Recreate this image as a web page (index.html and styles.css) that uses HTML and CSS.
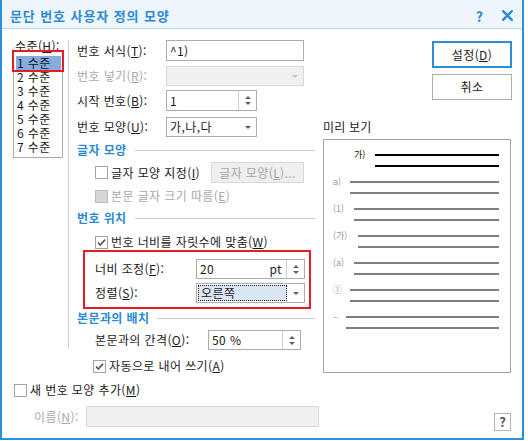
FILE: index.html
```html
<!DOCTYPE html>
<html lang="ko">
<head>
<meta charset="utf-8">
<title>문단 번호 사용자 정의 모양</title>
<link rel="stylesheet" href="styles.css">
</head>
<body>
<div class="window">
  <div class="titlebar">
    <span class="title">문단 번호 사용자 정의 모양</span>
    <span class="tb-help">?</span>
    <svg class="tb-close" width="11" height="11" viewBox="0 0 11 11"><path d="M1.2 1.2 L9.8 9.8 M9.8 1.2 L1.2 9.8" stroke="#2b8ad3" stroke-width="2.4" stroke-linecap="square"/></svg>
  </div>

  <div class="top">
    <div class="levels">
      <div class="lv-label">수준(<u>H</u>):</div>
      <div class="listbox">
        <div class="item sel">1 수준</div>
        <div class="item">2 수준</div>
        <div class="item">3 수준</div>
        <div class="item">4 수준</div>
        <div class="item">5 수준</div>
        <div class="item">6 수준</div>
        <div class="item">7 수준</div>
        <div class="mark"></div>
      </div>
    </div>

    <div class="form">
      <div class="row r1">
        <span class="lbl w89">번호 서식(<u>T</u>):</span>
        <div class="field w138"><span class="val">^1)</span></div>
      </div>
      <div class="row r2">
        <span class="lbl w89 dis">번호 넣기(<u>R</u>):</span>
        <div class="field w138 disabled"><span class="val"></span><span class="caret light"></span></div>
      </div>
      <div class="row r3">
        <span class="lbl w89">시작 번호(<u>B</u>):</span>
        <div class="field w91"><span class="val">1</span><span class="spin"><i class="up"></i><i class="dn"></i></span></div>
      </div>
      <div class="row r4">
        <span class="lbl w89">번호 모양(<u>U</u>):</span>
        <div class="field w91"><span class="val">가,나,다</span><span class="caret"></span></div>
      </div>

      <div class="sec s1">글자 모양</div>
      <div class="row r5 ind">
        <span class="cb"></span><span class="cb-text">글자 모양 지정(<u>I</u>)</span>
        <span class="pbtn">글자 모양(<u>L</u>)...</span>
      </div>
      <div class="row r6 ind">
        <span class="cb filled"></span><span class="cb-text dis">본문 글자 크기 따름(<u>E</u>)</span>
      </div>

      <div class="sec s2">번호 위치</div>
      <div class="row r7 ind">
        <span class="cb"><svg width="11" height="11" viewBox="0 0 11 11"><path d="M2 5.5 L4.3 8 L9 2.6" fill="none" stroke="#555" stroke-width="1.6"/></svg></span><span class="cb-text">번호 너비를 자릿수에 맞춤(<u>W</u>)</span>
      </div>
      <div class="redbox">
        <div class="row ra">
          <span class="lbl w101">너비 조정(<u>F</u>):</span>
          <div class="field w109"><span class="val">20</span><span class="unit">pt</span><span class="spin"><i class="up"></i><i class="dn"></i></span></div>
        </div>
        <div class="row rb">
          <span class="lbl w101">정렬(<u>S</u>):</span>
          <div class="field w109 padded"><span class="focus">오른쪽</span><span class="caret"></span></div>
        </div>
      </div>

      <div class="sec s3">본문과의 배치</div>
      <div class="row r8 ind">
        <span class="lbl w113">본문과의 간격(<u>O</u>):</span>
        <div class="field w93"><span class="val">50 %</span><span class="spin"><i class="up"></i><i class="dn"></i></span></div>
      </div>
      <div class="row r9">
        <span class="cb"><svg width="11" height="11" viewBox="0 0 11 11"><path d="M2 5.5 L4.3 8 L9 2.6" fill="none" stroke="#555" stroke-width="1.6"/></svg></span><span class="cb-text">자동으로 내어 쓰기(<u>A</u>)</span>
      </div>
    </div>

    <div class="side">
      <div class="btn default">설정(<u>D</u>)</div>
      <div class="btn cancel">취소</div>
      <div class="pv-label">미리 보기</div>
      <div class="preview">
        <div class="pv-row p1"><span class="pv-num">가)</span><div class="pv-lines"><i></i><i></i></div></div>
        <div class="pv-row p2"><span class="pv-num">a)</span><div class="pv-lines"><i></i><i></i></div></div>
        <div class="pv-row p3"><span class="pv-num">(1)</span><div class="pv-lines"><i></i><i></i></div></div>
        <div class="pv-row p4"><span class="pv-num">(가)</span><div class="pv-lines"><i></i><i></i></div></div>
        <div class="pv-row p5"><span class="pv-num">(a)</span><div class="pv-lines"><i></i><i></i></div></div>
        <div class="pv-row p6"><span class="pv-num">①</span><div class="pv-lines"><i></i><i></i></div></div>
        <div class="pv-row p7"><span class="pv-num">–</span><div class="pv-lines"><i></i><i></i></div></div>
      </div>
    </div>
  </div>

  <div class="bottom">
    <div class="row new-row">
      <span class="cb"></span><span class="cb-text">새 번호 모양 추가(<u>M</u>)</span>
    </div>
    <div class="name-row">
      <span class="lbl w52 dis">이름(<u>N</u>):</span>
      <div class="field w233 disabled"></div>
      <span class="help">?</span>
    </div>
  </div>
</div>
</body>
</html>
```

FILE: styles.css
```css
* { box-sizing: border-box; }
html, body { margin: 0; background: #fff; }
body {
  font-family: "Noto Sans CJK KR", "Noto Sans", sans-serif;
  font-size: 12px;
  line-height: 14px;
  color: #1a1a1a;
  letter-spacing: 0.4px;
}
u { text-decoration: underline; text-underline-offset: 1px; }

.window {
  width: 524px;
  height: 440px;
  border: 2px solid #2b8fd8;
  border-top: 0;
  background: #fff;
}

/* title bar */
.titlebar {
  height: 29px;
  background: #eff6fb;
  border-bottom: 1px solid #b5d6ee;
  display: flex;
  align-items: center;
  padding: 3px 0 0 8px;
}
.title {
  font-size: 13px;
  font-weight: bold;
  color: #2b8ad3;
  letter-spacing: 0.9px;
}
.tb-help {
  margin-left: auto;
  font-size: 14px;
  font-weight: bold;
  color: #2b8ad3;
  letter-spacing: 0;
}
.tb-close { margin: 0 9px 0 19px; }

/* top area */
.top { display: flex; padding-top: 11px; }

.levels {
  width: 67px;
  height: 308px;
  border-right: 1px solid #cdcdcd;
  padding-left: 11px;
  flex: none;
}
.lv-label { padding-left: 2px; line-height: 12px; height: 11px; }
.listbox {
  position: relative;
  width: 50px;
  border: 1px solid #a9a9a9;
  border-top-color: #d0d0d0;
  padding: 4px 1px 3px 2px;
}
.item { height: 14px; line-height: 14px; padding-left: 1px; white-space: nowrap; }
.item.sel { background: #86acdc; color: #101828; }
.mark {
  position: absolute;
  left: -2px;
  top: -2px;
  width: 52px;
  height: 22px;
  border: 2px solid #e81c24;
}

/* form column */
.form { width: 247px; padding: 0 1px 0 8px; flex: none; }
.row { display: flex; align-items: center; white-space: nowrap; }
.lbl { flex: none; }
.w89 { width: 89px; }
.w101 { width: 101px; }
.w113 { width: 113px; }
.w52 { width: 52px; }
.dis { color: #a8a8a8; }

.field {
  flex: none;
  height: 100%;
  border: 1px solid #acacac;
  background: #fff;
  display: flex;
  align-items: center;
}
.field.disabled { background: #f0f0f0; border-color: #d9d9d9; }
.w138 { width: 138px; }
.w91 { width: 91px; }
.w109 { width: 109px; }
.w93 { width: 93px; }
.w233 { width: 233px; }
.val { flex: 1; padding-left: 3px; }
.unit { padding-right: 4px; }
.spin {
  width: 18px;
  align-self: stretch;
  border-left: 1px solid #cfcfcf;
  display: flex;
  flex-direction: column;
  align-items: center;
  justify-content: center;
  gap: 3px;
}
.spin .up, .spin .dn { display: block; width: 0; height: 0; border-left: 3px solid transparent; border-right: 3px solid transparent; }
.spin .up { border-bottom: 3px solid #606060; }
.spin .dn { border-top: 3px solid #606060; }
.caret {
  width: 17px;
  align-self: stretch;
  display: flex;
  align-items: center;
  justify-content: center;
}
.caret::before {
  content: "";
  width: 0; height: 0;
  border-left: 3px solid transparent;
  border-right: 3px solid transparent;
  border-top: 3px solid #5a5a5a;
}
.caret.light::before { border-top-color: #c4c4c4; }
.field.padded { padding: 1px 0 1px 1px; }
.focus {
  flex: 1;
  align-self: stretch;
  border: 1px dotted #222;
  background: #dbe6f4;
  padding-left: 2px;
  display: flex;
  align-items: center;
}

.r1 { height: 21px; }
.r2 { height: 20px; margin-top: 5px; }
.r3 { height: 21px; margin-top: 4px; }
.r4 { height: 20px; margin-top: 6px; }
.r5 { height: 21px; margin-top: 5px; }
.r6 { height: 14px; margin-top: 6px; }
.r7 { height: 14px; margin-top: 10px; }
.r8 { height: 20px; margin-top: 5px; }
.r9 { height: 14px; margin-top: 9px; padding-left: 16px; }
.ind { padding-left: 18px; }

.sec {
  display: flex;
  align-items: center;
  height: 14px;
  color: #2b8ad3;
  font-weight: bold;
  white-space: nowrap;
}
.sec::after {
  content: "";
  flex: 1;
  height: 1px;
  background: #cbcbcb;
  margin-left: 8px;
}
.s1 { margin-top: 6px; }
.s2 { margin-top: 8px; }
.s3 { margin-top: 2px; }

.cb {
  flex: none;
  width: 13px;
  height: 13px;
  border: 1px solid #a3a3a3;
  background: #fff;
  margin-right: 3px;
  display: flex;
  align-items: center;
  justify-content: center;
}
.cb.filled { background: #d6d6d6; border-color: #bdbdbd; }
.pbtn {
  margin-left: auto;
  margin-right: 11px;
  width: 93px;
  height: 21px;
  background: #efefef;
  border: 1px solid #d8d8d8;
  color: #a6a6a6;
  display: flex;
  align-items: center;
  justify-content: center;
}

.redbox {
  margin: 1px 0 0 6px;
  width: 228px;
  border: 2px solid #e81c24;
  padding: 7px 0 4px 10px;
}
.ra { height: 20px; }
.rb { height: 20px; margin-top: 4px; }

/* side column */
.side {
  flex: 1;
  display: flex;
  flex-direction: column;
  padding-left: 7px;
}
.btn {
  align-self: flex-end;
  margin-right: 10px;
  width: 80px;
  display: flex;
  align-items: center;
  justify-content: center;
  background: #fff;
}
.btn.default { margin-top: 1px; height: 27px; border: 2px solid #2b8fd8; }
.btn.cancel { margin-top: 6px; height: 26px; border: 1px solid #adadad; }
.pv-label { margin-top: 20px; height: 14px; letter-spacing: 0.2px; }
.preview {
  margin-top: 5px;
  width: 188px;
  height: 234px;
  border: 1px solid #a3a3a3;
  padding: 14px 11px 0 9px;
}
.pv-row { display: flex; height: 27px; align-items: flex-start; }
.pv-num {
  flex: none;
  font-size: 9px;
  line-height: 10px;
  margin-top: -4px;
  color: #9c9c9c;
  letter-spacing: 0;
  white-space: nowrap;
}
.pv-lines { flex: 1; display: flex; flex-direction: column; gap: 9px; }
.pv-lines i { display: block; height: 2px; background: #808080; }
.p1 { padding-left: 21px; }
.p1 .pv-num { color: #111; width: 21px; }
.p1 .pv-lines i { background: #000; }
.p2 .pv-num { width: 17px; }
.p3 .pv-num { width: 21px; }
.p4 .pv-num { width: 25px; }
.p5 .pv-num { width: 21px; }
.p6 .pv-num { width: 17px; }
.p7 .pv-num { width: 13px; }

/* bottom area */
.bottom { padding-left: 12px; }
.new-row { height: 14px; margin-top: 10px; }
.name-row {
  display: flex;
  align-items: flex-start;
  height: 21px;
  margin-top: 9px;
  padding-left: 20px;
  white-space: nowrap;
}
.name-row .lbl { align-self: center; }
.help {
  margin: 7px 11px 0 auto;
  width: 17px;
  height: 18px;
  border: 1px solid #b4b4b4;
  display: flex;
  align-items: center;
  justify-content: center;
  font-size: 13px;
  font-weight: bold;
  color: #555;
  letter-spacing: 0;
}
```
